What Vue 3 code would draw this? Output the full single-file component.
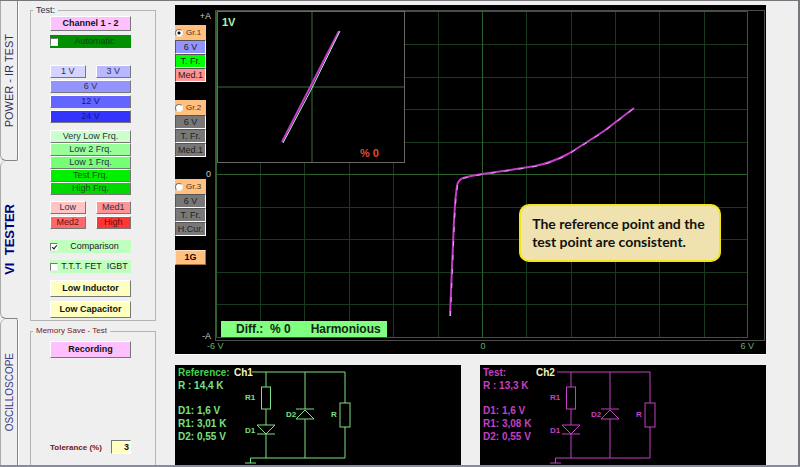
<script setup>
import { ref } from 'vue'

const automatic = ref(false)
const comparison = ref(true)
const transistor = ref(false)
const tolerance = ref('3')
const activeGroup = ref('Gr.1')

const voltages = [
  { label: '6 V', tone: 'blue-2' },
  { label: '12 V', tone: 'blue-3' },
  { label: '24 V', tone: 'blue-4' },
]
const frequencies = [
  { label: 'Very Low Frq.', tone: 'green-1' },
  { label: 'Low 2 Frq.', tone: 'green-2' },
  { label: 'Low 1 Frq.', tone: 'green-3' },
  { label: 'Test Frq.', tone: 'green-4' },
  { label: 'High Frq.', tone: 'green-5' },
]
const currents = [
  { label: 'Low', tone: 'red-1' },
  { label: 'Med1', tone: 'red-2' },
  { label: 'Med2', tone: 'red-3' },
  { label: 'High', tone: 'red-4' },
]
const groups = [
  { name: 'Gr.1', keys: [['6 V', 'blue-2'], ['T. Fr.', 'lime'], ['Med.1', 'red-2']] },
  { name: 'Gr.2', keys: [['6 V', 'idle'], ['T. Fr.', 'idle'], ['Med.1', 'idle']] },
  { name: 'Gr.3', keys: [['6 V', 'idle'], ['T. Fr.', 'idle'], ['H.Cur.', 'idle']] },
]
const channels = [
  { id: 'ref', title: 'Reference:', name: 'Ch1', nameX: 4, r: 'R : 14,4 K', rest: ['D1: 1,6 V', 'R1: 3,01 K', 'D2: 0,55 V'] },
  { id: 'test', title: 'Test:', name: 'Ch2', nameX: 1, r: 'R : 13,3 K', rest: ['D1: 1,6 V', 'R1: 3,08 K', 'D2: 0,55 V'] },
]
const columns = [54, 98, 143, 187, 232, 276, 320, 365, 409, 453, 498]
const rows = [39, 72, 104, 137, 169, 202, 234, 267, 299]
</script>

<template>
  <div class="app">
    <nav class="tabs">
      <a href="#power" class="tab first"><span>POWER - IR TEST</span></a>
      <a href="#vi" class="tab active"><span>VI&nbsp; TESTER</span></a>
      <a href="#scope" class="tab last"><span>OSCILLOSCOPE</span></a>
    </nav>

    <aside class="side">
      <fieldset class="box test-box">
        <legend>Test:</legend>
        <div class="stack">
          <button class="key strong pink">Channel 1 - 2</button>
          <label class="check auto"><input v-model="automatic" type="checkbox"><span>Automatic</span></label>
          <div class="levels">
            <div class="pair">
              <button class="key blue-0">1 V</button>
              <button class="key blue-1">3 V</button>
            </div>
            <button v-for="v in voltages" :key="v.label" class="key" :class="v.tone">{{ v.label }}</button>
          </div>
          <div class="freqs">
            <button v-for="f in frequencies" :key="f.label" class="key" :class="f.tone">{{ f.label }}</button>
          </div>
          <div class="pair">
            <button v-for="c in currents" :key="c.label" class="key" :class="c.tone">{{ c.label }}</button>
          </div>
          <div class="checks">
            <label class="check"><input v-model="comparison" type="checkbox"><span>Comparison</span></label>
            <label class="check"><input v-model="transistor" type="checkbox"><span>T.T.T. FET&nbsp; IGBT</span></label>
          </div>
          <div class="lows">
            <button class="key strong tall cream">Low Inductor</button>
            <button class="key strong tall cream">Low Capacitor</button>
          </div>
        </div>
      </fieldset>

      <fieldset class="box memory-box">
        <legend>Memory Save - Test</legend>
        <div class="stack memory">
          <button class="key strong tall pink">Recording</button>
          <div class="tolerance">
            <label for="tolerance">Tolerance (%)</label>
            <input id="tolerance" v-model="tolerance" type="text">
          </div>
        </div>
      </fieldset>
    </aside>

    <main class="main">
      <section class="scope">
        <div class="groups">
          <div v-for="g in groups" :key="g.name" class="group">
            <label class="group-head">
              <input v-model="activeGroup" type="radio" name="group" :value="g.name">{{ g.name }}
            </label>
            <button v-for="k in g.keys" :key="k[0]" class="group-key" :class="k[1]">{{ k[0] }}</button>
          </div>
          <button class="one-g">1G</button>
        </div>

        <div class="plot">
          <svg class="graph" viewBox="0 0 560 349">
            <rect x="9.500" y="5.500" width="549" height="330" class="frame" />
            <g class="grid">
              <path v-for="x in columns" :key="'c' + x" :d="`M${x + 0.5} 7V332`" />
              <path v-for="y in rows" :key="'r' + y" :d="`M11 ${y + 0.5}H541`" />
            </g>
            <path d="M11 6.500H541.500V332.500H10.500V6.500M276.500 7V332M11 169.500H541" class="axis" />
            <g class="scale">
              <text x="5" y="14" text-anchor="end">+A</text>
              <text x="5" y="172" text-anchor="end">0</text>
              <text x="5" y="334" text-anchor="end">-A</text>
            </g>
            <g class="volts">
              <text x="1" y="344">-6 V</text>
              <text x="277" y="344" text-anchor="middle">0</text>
              <text x="548" y="344" text-anchor="end">6 V</text>
            </g>
            <path class="trace" d="M244 311L245 286L246 262L247 240L248 215L249.500 193L251 181Q252 175 257 173Q264 171 276 169L304 165L329 161Q345 158 362 149Q372 143 398 126L428 103" />
            <path class="trace-mix" d="M244.500 311L245.500 286L246.500 262L247.500 240L248.500 215L250 193L251.500 181Q252.500 175 257 173.500Q264 171.500 276 169.500L304 165.500L329 161.500Q345 158.500 362 149.500Q372 143.500 398 126.500L428 103.500" />
            <rect x="11.500" y="6.500" width="187" height="151" class="inset" />
            <path d="M106 7V157M12 82H198" class="inset-axis" />
            <path d="M76 137L133 26" class="trace" />
            <path d="M77 138L106 83L134 26" class="trace-light" />
            <text x="16" y="21" class="range">1V</text>
            <text x="154" y="152" class="percent">% 0</text>
          </svg>
          <output class="diff"><span>Diff.:&nbsp; % 0</span><span>Harmonious</span></output>
          <p class="callout">The reference point and the test point are consistent.</p>
        </div>
      </section>

      <section class="circuits">
        <article v-for="c in channels" :key="c.id" class="circuit" :class="c.id">
          <div class="readings">
            <h2>{{ c.title }}</h2>
            <p>{{ c.r }}</p>
            <div class="rest"><p v-for="line in c.rest" :key="line">{{ line }}</p></div>
          </div>
          <svg class="schematic" viewBox="0 0 130 100">
            <g class="wires">
              <path d="M22 7H115V38M36 7V22M36 44V60M36 69V93M75 7V44M75 54V93M115 62V93M115 93H20.500V98M15 98H26" />
              <rect x="31.500" y="22" width="9" height="22" />
              <rect x="110" y="38" width="10" height="24" />
              <path d="M27 69H45M27 60H45L36 69ZM66 44H84M75 45L84 54H66Z" />
            </g>
            <text class="channel" :x="c.nameX" y="11">{{ c.name }}</text>
            <text x="15" y="35">R1</text>
            <text x="15" y="68">D1</text>
            <text x="56" y="52">D2</text>
            <text x="101" y="52">R</text>
          </svg>
        </article>
      </section>
    </main>
  </div>
</template>

<style>
body {
  margin: 0;
  background: #efefef;
}
</style>

<style scoped>
* {
  box-sizing: border-box;
}
.app {
  display: flex;
  min-height: 100vh;
  border-top: 1px solid #79757c;
  border-right: 2px solid #77757d;
  border-bottom: 2px solid #858d9c;
  background: #efefef;
  font-family: "Liberation Sans", Arial, sans-serif;
  font-size: 9px;
  color: #222;
}
button,
input {
  font: inherit;
  margin: 0;
}
button {
  cursor: pointer;
}
h2,
p {
  margin: 0;
}

.tabs {
  display: flex;
  flex-direction: column;
  flex: 0 0 18px;
}
.tab {
  display: flex;
  align-items: center;
  justify-content: center;
  border-left: 1px solid #aaa;
  border-right: 1px solid #858585;
  box-shadow: 1px 0 #fff;
  color: #30305c;
  font-size: 11px;
  text-decoration: none;
}
.tab span {
  writing-mode: vertical-rl;
  transform: rotate(180deg);
  white-space: nowrap;
}
.tab.first {
  flex: 0 0 160px;
  border-bottom: 1px solid #858585;
  border-radius: 0 0 2px 6px;
}
.tab.active {
  flex: 0 0 158px;
  border-right-color: transparent;
  border-bottom: 1px solid #858585;
  border-radius: 6px 0 0 6px;
  box-shadow: none;
  color: #000078;
  font-size: 13px;
  font-weight: bold;
}
.tab.last {
  flex: 1 0 140px;
  border-radius: 6px 2px 0 0;
  font-size: 10px;
  color: #3c3c8c;
  padding-bottom: 0;
}

.side {
  display: flex;
  flex-direction: column;
  flex: 0 0 157px;
  gap: 4px;
  padding: 3px 19px 0 12px;
}
.box {
  min-width: 0;
  margin: 0;
  padding: 0 24px 2px 19px;
  border: 1px solid #b4b4b4;
}
.box legend {
  margin-left: -17px;
  padding: 0 3px;
  line-height: 12px;
  color: #2c2c50;
  white-space: nowrap;
}
.memory-box {
  display: flex;
  flex-direction: column;
  flex: 1;
  border-bottom: 0;
}
.memory-box legend {
  font-size: 8px;
  color: #6c1c1c;
}
.stack {
  display: flex;
  flex-direction: column;
}
.memory {
  flex: 1;
  justify-content: space-between;
  height: 100%;
  padding: 4px 0 9px;
}
.key {
  width: 100%;
  height: 13px;
  padding: 0;
  border: 1px solid;
  border-color: #fff #777 #777 #fff;
  line-height: 11px;
  color: #30304c;
  white-space: nowrap;
}
.strong {
  height: 15px;
  line-height: 13px;
  font-weight: bold;
  color: #111;
}
.tall {
  height: 17px;
  line-height: 15px;
}
.levels {
  display: flex;
  flex-direction: column;
  gap: 2px;
  margin: 17px 0 7px;
}
.pair {
  display: grid;
  grid-template-columns: 1fr 1fr;
  gap: 2px 10px;
}
.freqs {
  display: flex;
  flex-direction: column;
  margin-bottom: 6px;
}
.checks {
  display: flex;
  flex-direction: column;
  gap: 7px;
  margin: 11px 0 7px;
}
.lows {
  display: flex;
  flex-direction: column;
  gap: 4px;
}
.check {
  display: flex;
  align-items: center;
  height: 13px;
  background: #c0ffc0;
  line-height: 13px;
  white-space: nowrap;
}
.check span {
  flex: 1;
  text-align: center;
}
.check input {
  appearance: none;
  flex: 0 0 8px;
  height: 8px;
  border: 1px solid;
  border-color: #777 #eee #eee #777;
  background: #fff;
}
.check input:checked::after {
  content: "";
  display: block;
  width: 2px;
  height: 4px;
  margin: 0 0 0 2px;
  border: solid #111;
  border-width: 0 1px 1px 0;
  transform: rotate(40deg);
}
.check.auto {
  margin-top: 4px;
  background: #009000;
  color: #0c480c;
}
.tolerance {
  display: flex;
  align-items: center;
  justify-content: space-between;
  font-size: 8px;
  font-weight: bold;
  color: #6c1818;
  white-space: nowrap;
}
.tolerance input {
  width: 20px;
  height: 14px;
  padding: 0 1px;
  border: 1px solid;
  border-color: #777 #fff #fff #777;
  background: #ffffc4;
  color: #111;
  font-size: 9px;
  text-align: right;
}

.pink { background: #ffc0ff; }
.cream { background: #ffffc0; }
.blue-0 { background: #d4d4ff; }
.blue-1 { background: #b8b8ff; }
.blue-2 { background: #9494ff; }
.blue-3 { background: #6464ff; }
.blue-4 { background: #3434ff; }
.green-1 { background: #ccffcc; }
.green-2 { background: #98ff98; }
.green-3 { background: #74ff74; }
.green-4 { background: #00f000; }
.green-5 { background: #00d800; }
.lime { background: #00ff00; }
.red-1 { background: #ffc4c4; }
.red-2 { background: #ff9494; }
.red-3 { background: #ff6868; }
.red-4 { background: #ff3434; }
.idle { background: #787878; }
.green-4,
.green-5,
.lime { color: #145014; }
.red-3,
.red-4 { color: #601414; }
.blue-3,
.blue-4 { color: #181870; }

.main {
  display: flex;
  flex-direction: column;
  flex: 1;
  gap: 11px;
  min-width: 0;
  padding: 4px 32px 0 0;
}
.scope {
  display: grid;
  grid-template-columns: 31px 1fr;
  background: #000;
  box-shadow: 0 1px #fff;
}
.groups {
  display: flex;
  flex-direction: column;
  padding-top: 20px;
}
.group {
  display: flex;
  flex-direction: column;
  margin-bottom: 18px;
}
.group:nth-child(2) {
  margin-bottom: 22px;
}
.group:nth-child(3) {
  margin-bottom: 14px;
}
.group-head {
  display: flex;
  align-items: center;
  gap: 3px;
  height: 15px;
  background: #ffc080;
  color: #503018;
  font-size: 8px;
  white-space: nowrap;
}
.group-head input {
  appearance: none;
  flex: 0 0 8px;
  height: 8px;
  border: 1px solid;
  border-color: #777 #eee #eee #777;
  border-radius: 50%;
  background: #fff;
}
.group-head input:checked {
  background: radial-gradient(circle, #111 1px, #fff 2px);
}
.group-key {
  height: 14px;
  padding: 0;
  border: 1px solid;
  border-color: #555 #fff #fff #555;
  color: #222;
  line-height: 12px;
  white-space: nowrap;
}
.one-g {
  height: 15px;
  padding: 0;
  border: 1px solid;
  border-color: #ffe0c0 #a07040 #a07040 #ffe0c0;
  background: #ffc080;
  color: #200;
  font-weight: bold;
  line-height: 13px;
}

.plot {
  position: relative;
  min-width: 0;
}
.graph {
  display: block;
  width: 100%;
  overflow: visible;
}
.graph path,
.graph rect {
  fill: none;
}
.graph .frame { stroke: #4c4c4c; }
.grid { stroke: #193a1e; }
.graph .axis { stroke: #2c602c; }
.scale { fill: #ccc; }
.volts { fill: #60b060; }
.graph .trace {
  stroke: #c43cc8;
  stroke-width: 2;
}
.graph .trace-mix {
  stroke: #e0a8e4;
  stroke-dasharray: 5 9;
}
.graph .trace-light { stroke: #a8f4d0; }
.graph .inset {
  fill: #000;
  stroke: #686868;
}
.graph .inset-axis { stroke: #347034; }
.range {
  fill: #b0f0b0;
  font-size: 11px;
  font-weight: bold;
}
.percent {
  fill: #e04c30;
  font-size: 11px;
  font-weight: bold;
}
.diff {
  position: absolute;
  left: 15px;
  bottom: 17px;
  display: flex;
  gap: 20px;
  padding: 0 6px 0 15px;
  background: #80ff80;
  color: #142814;
  font-size: 12px;
  font-weight: bold;
  line-height: 16px;
  white-space: nowrap;
}
.callout {
  position: absolute;
  right: 8%;
  top: 57%;
  width: 202px;
  padding: 9px 11px;
  border: 2px solid #f4e418;
  border-radius: 10px;
  background: #efe2ae;
  color: #111;
  font-family: Lato, sans-serif;
  font-size: 14px;
  font-weight: bold;
  line-height: 18px;
}

.circuits {
  display: grid;
  grid-template-columns: 1fr 1fr;
  flex: 1;
  gap: 19px;
}
.circuit {
  display: flex;
  min-height: 100px;
  padding-left: 3px;
  background: #000;
}
.ref {
  color: #7ce084;
}
.test {
  color: #c440c4;
}
.readings {
  flex: 0 0 52px;
  padding-top: 1px;
  font-size: 10px;
  font-weight: bold;
  line-height: 13px;
  white-space: nowrap;
}
.readings h2 {
  font-size: 10px;
}
.ref h2 {
  color: #48d050;
}
.rest {
  margin-top: 12px;
}
.schematic {
  flex: 0 0 130px;
  height: 100px;
  fill: currentColor;
  font-size: 8px;
  font-weight: bold;
}
.wires {
  fill: none;
  stroke: currentColor;
  stroke-width: 1;
}
.channel {
  fill: #f4f4c0;
  font-size: 10px;
}
</style>
